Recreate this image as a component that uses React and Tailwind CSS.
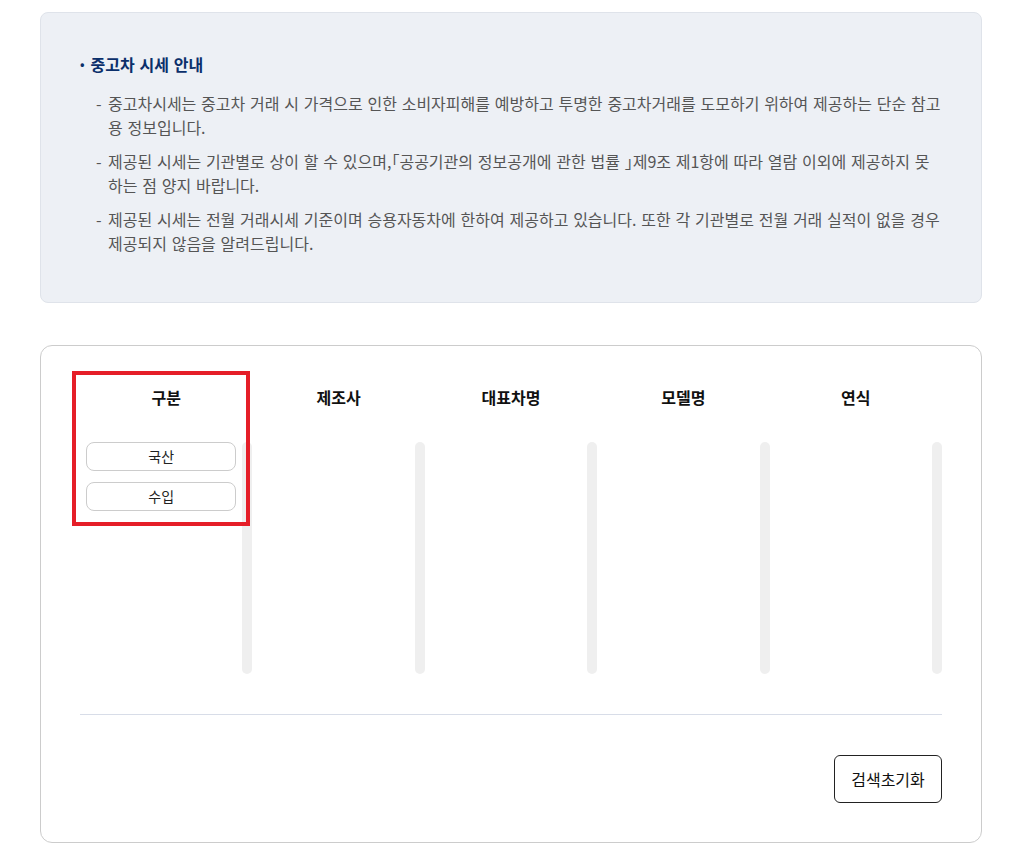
import React from 'react';

// 괄호는 반각으로 보이도록 halt 적용
const Br = ({ children }) => <span className="[font-feature-settings:'halt']">{children}</span>;

const notices = [
    <>중고차시세는 중고차 거래 시 가격으로 인한 소비자피해를 예방하고 투명한 중고차거래를 도모하기 위하여 제공하는 단순 참고용 정보입니다.</>,
    <>제공된 시세는 기관별로 상이 할 수 있으며,<Br>「</Br>공공기관의 정보공개에 관한 법률 <Br>」</Br>제9조 제1항에 따라 열람 이외에 제공하지 못하는 점 양지 바랍니다.</>,
    <>제공된 시세는 전월 거래시세 기준이며 승용자동차에 한하여 제공하고 있습니다. 또한 각 기관별로 전월 거래 실적이 없을 경우 제공되지 않음을 알려드립니다.</>,
];

const columns = ["구분", "제조사", "대표차명", "모델명", "연식"];

// one column of the search filter
const FilterColumn = ({ title, items = [] }) => (
    <div className="flex flex-col">
        <h3 className="text-center text-[16px] leading-6 font-bold text-[#111]">{title}</h3>
        <div className="mt-[33px] flex h-[232px]">
            <div className="flex-1 flex flex-col gap-[11px] pl-[6px] pr-[6px]">
                {items.map((item) => (
                    <button
                        key={item}
                        className="h-[29px] w-full rounded-lg border border-[#cccccc] bg-white text-[14px] text-[#222]"
                    >
                        {item}
                    </button>
                ))}
            </div>
            <div className="w-[10px] rounded-full bg-[#efefef]" />
        </div>
    </div>
);

export default function App() {
    return (
        <div
            className="w-[1017px] min-h-[861px] bg-white pt-[12px] pl-[40px]"
            style={{ fontFamily: '"Noto Sans CJK KR", "Noto Sans", sans-serif' }}
        >
            {/* 안내 박스 */}
            <div className="w-[942px] rounded-lg border border-[#dfe3ea] bg-[#edf0f5] px-[39px] pt-[39px] pb-[47px] [word-spacing:1.2px]">
                <p className="flex items-center text-[16px] leading-6 font-bold text-[#0b2f6b]">
                    <span className="mr-[6px] text-[12px]">•</span>중고차 시세 안내
                </p>
                <ul className="mt-[15px] flex flex-col gap-[10px]">
                    {notices.map((text, i) => (
                        <li key={i} className="flex text-[16px] leading-6 text-[#555]">
                            <span className="w-[28px] shrink-0 pl-[16px]">-</span>
                            <span className="flex-1">{text}</span>
                        </li>
                    ))}
                </ul>
            </div>

            {/* 검색 박스 */}
            <div className="relative mt-[42px] w-[942px] rounded-xl border border-[#cccccc] bg-white px-[39px] pt-[39px] pb-[39px]">
                <div className="grid grid-cols-5">
                    <FilterColumn title={columns[0]} items={["국산", "수입"]} />
                    {columns.slice(1).map((c) => (
                        <FilterColumn key={c} title={c} />
                    ))}
                </div>

                <div className="mt-[40px] h-px bg-[#d8dde8]" />

                <div className="mt-[40px] flex justify-end">
                    <button className="h-[48px] w-[108px] rounded-md border border-[#222] bg-white text-[16px] text-[#111]">
                        검색초기화
                    </button>
                </div>

                {/* 강조 표시 */}
                <div className="pointer-events-none absolute left-[31px] top-[25px] h-[155px] w-[178px] border-4 border-[#e51e28]" />
            </div>
        </div>
    );
}
